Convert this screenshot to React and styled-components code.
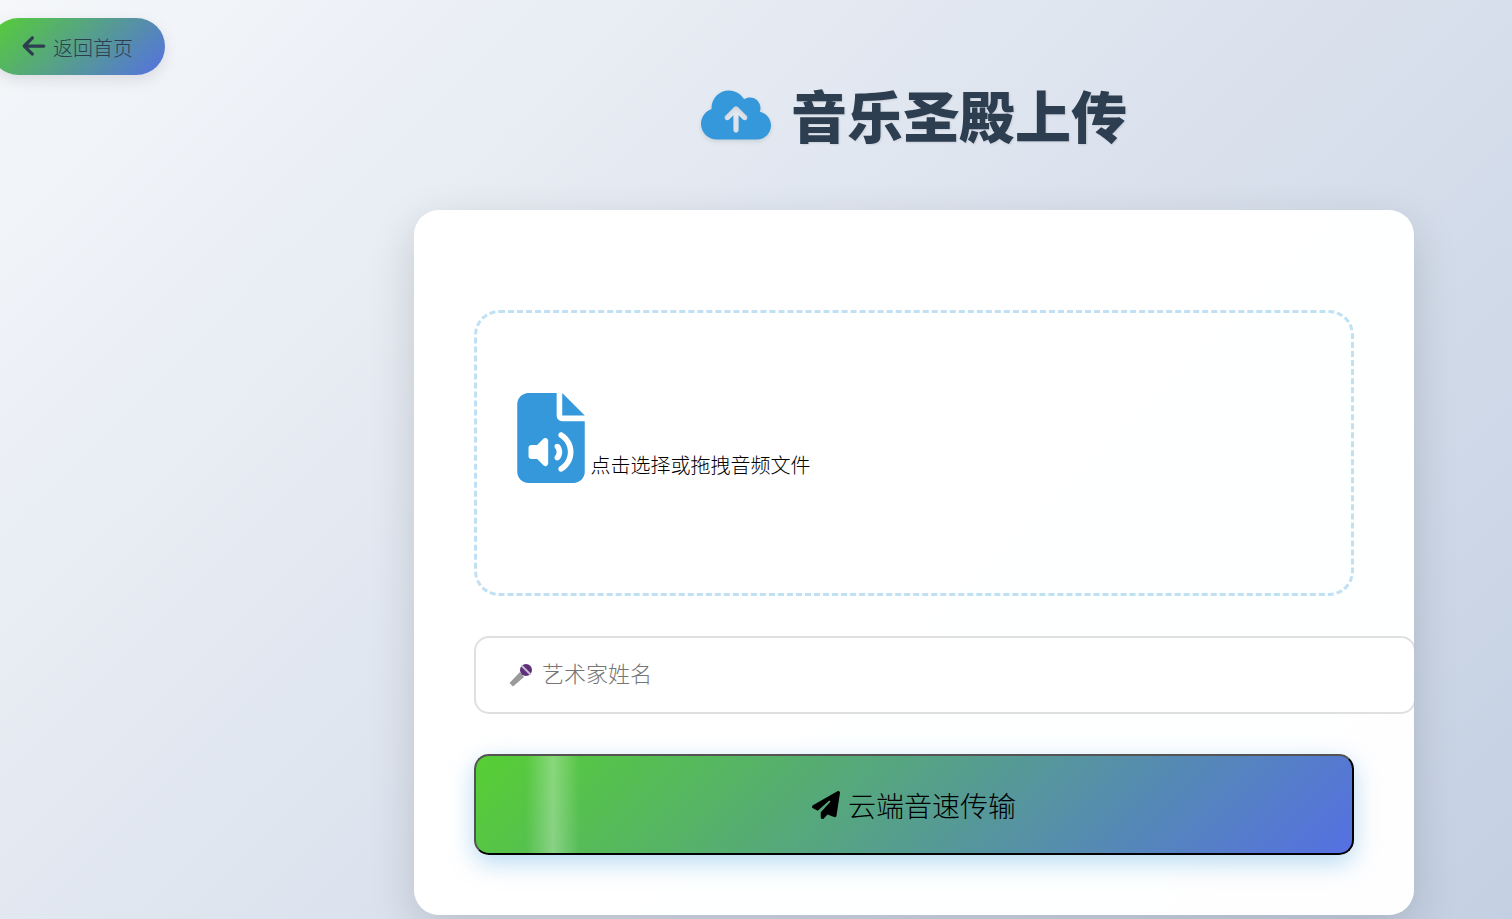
import React from 'react';
import styled, { createGlobalStyle } from 'styled-components';
import { FaCloudArrowUp, FaFileAudio, FaPaperPlane, FaArrowLeft } from 'react-icons/fa6';

const Global = createGlobalStyle`
  * { box-sizing: border-box; }
  html, body { margin: 0; height: 919px; overflow: hidden; }
  body {
    font-family: "Liberation Sans", "Noto Sans CJK SC", sans-serif;
    background: linear-gradient(135deg, #f5f7fa 0%, #c3cfe2 100%) no-repeat;
    background-size: 100% 965px;
  }
`;
const Page = styled.div`
  position: relative;
  height: 919px;
  overflow: hidden;
  padding: 0 98px 0 414px;
`;
const Back = styled.a`
  position: absolute;
  left: -10px;
  top: 18px;
  width: 175px;
  height: 57px;
  border-radius: 29px;
  padding-left: 31px;
  display: flex;
  align-items: center;
  gap: 6px;
  color: #2c3e50;
  font-size: 20px;
  font-weight: 300;
  background: linear-gradient(135deg, #56cf33 0%, #5570e3 100%);
  box-shadow: 0 5px 15px rgba(0, 0, 0, 0.1);
  svg { width: 26px; height: 26px; margin-top: -2px; }
  span { margin-top: 2px; }
`;
const Title = styled.h1`
  margin: 0;
  padding-top: 80px;
  height: 210px;
  display: flex;
  justify-content: center;
  align-items: flex-start;
  gap: 20px;
  font-size: 56px;
  line-height: 78px;
  font-weight: 900;
  color: #2c3e50;
  text-shadow: 1px 1px 2px rgba(0, 0, 0, 0.1);
  svg { width: 70px; height: 56px; margin-top: 7px; color: #3498db; filter: drop-shadow(0 2px 2px rgba(0,0,0,.1)); }
`;
const Card = styled.div`
  width: 1000px;
  height: 705px;
  background: rgba(255, 255, 255, 0.98);
  border-radius: 25px;
  padding: 100px 60px 0;
  overflow: hidden;
  box-shadow: 0 15px 45px rgba(0, 0, 0, 0.15);
`;
const Drop = styled.div`
  width: 880px;
  height: 286px;
  border: 3px dashed rgba(52, 152, 219, 0.3);
  border-radius: 25px;
  padding: 80px 40px;
  font-size: 20px;
  font-weight: 300;
  color: #000;
  svg { width: 68px; height: 90px; color: #3498db; vertical-align: -10px; }
`;
const Field = styled.div`
  width: 942px;
  height: 78px;
  margin-top: 40px;
  border: 2px solid #e0e0e0;
  border-radius: 15px;
  background: #fff;
  display: flex;
  align-items: center;
  gap: 9px;
  padding-left: 33px;
  font-size: 22px;
  font-weight: 300;
  color: #757575;
  span { margin-top: -6px; }
`;
const MicIcon = styled.svg`
  width: 24px;
  height: 24px;
`;
const SubmitWrap = styled.div`
  width: 880px;
  margin-top: 40px;
  border-radius: 15px;
  box-shadow: 0 8px 25px rgba(52, 152, 219, 0.35);
`;
const Submit = styled.div`
  position: relative;
  height: 101px;
  border: 2px outset #000;
  border-radius: 15px;
  display: flex;
  justify-content: center;
  align-items: center;
  gap: 8px;
  overflow: hidden;
  color: #000;
  font-size: 28px;
  font-weight: 300;
  background: linear-gradient(135deg, #56cf33 0%, #5570e3 100%);
  svg { width: 28px; height: 28px; }
`;
const Shine = styled.span`
  position: absolute;
  left: 50px;
  top: 0;
  bottom: 0;
  width: 54px;
  background: linear-gradient(90deg, transparent, rgba(255,255,255,0.3), transparent);
`;

export default function App() {
  return (
    <Page>
      <Global />
      <Back><FaArrowLeft /><span>返回首页</span></Back>
      <Title><FaCloudArrowUp />音乐圣殿上传</Title>
      <Card>
        <Drop><FaFileAudio /> 点击选择或拖拽音频文件</Drop>
        <Field>
          <MicIcon viewBox="0 0 24 24">
            <path d="M0.5 20 L11 9 L15 14 L4 23.5 Z" fill="#9a9a9a" />
            <circle cx="17" cy="7" r="6" fill="#5f2f7a" />
            <path d="M12.5 2.5 L21.5 11.5" stroke="#c8bcd0" strokeWidth="2" />
          </MicIcon>
          <span>艺术家姓名</span>
        </Field>
        <SubmitWrap><Submit><Shine /><FaPaperPlane /><span>云端音速传输</span></Submit></SubmitWrap>
      </Card>
    </Page>
  );
}
